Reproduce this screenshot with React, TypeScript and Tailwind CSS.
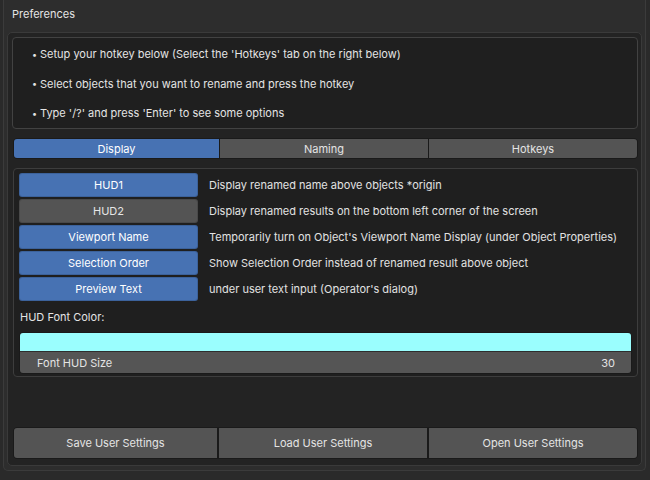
import React from "react";

const toggles = [
  { label: "HUD1", on: true, desc: "Display renamed name above objects *origin" },
  { label: "HUD2", on: false, desc: "Display renamed results on the bottom left corner of the screen" },
  { label: "Viewport Name", on: true, desc: "Temporarily turn on Object's Viewport Name Display (under Object Properties)" },
  { label: "Selection Order", on: true, desc: "Show Selection Order instead of renamed result above object" },
  { label: "Preview Text", on: true, desc: "under user text input (Operator's dialog)" },
];

const bullets = [
  "Setup your hotkey below (Select the 'Hotkeys' tab on the right below)",
  "Select objects that you want to rename and press the hotkey",
  "Type '/?' and press 'Enter' to see some options",
];

export default function App() {
  return (
    <div className="w-[650px] h-[480px] bg-[#2a2a2a] overflow-hidden font-['Inter',_'Noto_Sans',_sans-serif] text-[11px] text-[#e4e4e4] whitespace-nowrap">
      <div className="ml-[3px] mr-[4px] h-[471px] border-x border-b border-[#3b3b3b] bg-[#2d2d2d] rounded-b-[5px] flex flex-col">
        <div className="h-[32px] pl-[8px] pt-[7px] leading-[15px]">Preferences</div>
        <div className="ml-[3px] mr-[3px] h-[434px] rounded-[5px] border border-[#3a3a3a] bg-[#232323] pl-[4px] pr-[3px] pt-[4px] flex flex-col">
          <div className="h-[92px] rounded-[4px] border border-[#424242] bg-[#1f1f1f] flex flex-col pt-[2px]">
            {bullets.map((b) => (
              <div key={b} className="h-[30px] flex items-center pl-[19px]">
                <span className="text-[9px] w-[8px]">•</span>
                <span>{b}</span>
              </div>
            ))}
          </div>
          <div className="mt-[9px] ml-[1px] h-[21px] rounded-[4px] border border-[#1a1a1a] bg-[#1a1a1a] flex gap-px overflow-hidden">
            <div className="w-[205px] bg-[#4772b3] text-white flex items-center justify-center pt-px">Display</div>
            <div className="flex-1 bg-[#545454] flex items-center justify-center pt-px">Naming</div>
            <div className="flex-1 bg-[#545454] flex items-center justify-center pt-px">Hotkeys</div>
          </div>
          <div className="mt-[9px] ml-[1px] h-[209px] rounded-[4px] border border-[#3d3d3d] bg-[#1f1f1f] pl-[5px] pr-[5px] pt-[4px] flex flex-col">
            <div className="flex flex-col gap-[2px]">
              {toggles.map((t) => (
                <div key={t.label} className="h-[24px] flex items-center">
                  <div
                    className={
                      t.on
                        ? "w-[179px] shrink-0 h-full rounded-[3px] bg-[#4772b3] text-white flex items-center justify-center pt-px border border-[#2d4a78]/40"
                        : "w-[179px] shrink-0 h-full rounded-[3px] bg-[#545454] text-[#e6e6e6] flex items-center justify-center pt-px border border-[#3a3a3a]/40"
                    }
                  >
                    {t.label}
                  </div>
                  <div className="ml-[11px] pt-px text-[#e2e2e2]">{t.desc}</div>
                </div>
              ))}
            </div>
            <div className="h-[30px] flex items-center pl-[1px] mt-px pt-px">HUD Font Color:</div>
            <div className="rounded-[4px] border border-[#1a1a1a] overflow-hidden flex flex-col">
              <div className="h-[18px] bg-[#9afefe]" />
              <div className="h-[22px] bg-[#555555] border-t border-[#2e2e2e] flex items-center justify-between pl-[17px] pr-[16px] pt-px">
                <span>Font HUD Size</span>
                <span>30</span>
              </div>
            </div>
          </div>
          <div className="mt-[50px] ml-[1px] h-[32px] rounded-[4px] border border-[#1a1a1a] bg-[#1a1a1a] flex gap-[2px] overflow-hidden">
            <div className="w-[203px] bg-[#545454] flex items-center justify-center pt-px">Save User Settings</div>
            <div className="flex-1 bg-[#545454] flex items-center justify-center pt-px">Load User Settings</div>
            <div className="flex-1 bg-[#545454] flex items-center justify-center pt-px">Open User Settings</div>
          </div>
        </div>
      </div>
    </div>
  );
}
